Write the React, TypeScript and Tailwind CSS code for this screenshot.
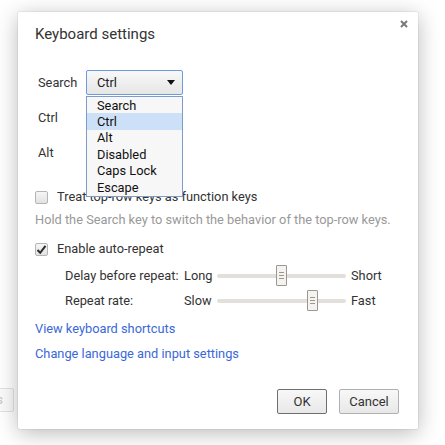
import React from "react"

const FONT = { fontFamily: "Roboto, 'Noto Sans', Arial, sans-serif" }

type SliderProps = {
  thumbLeft: number
}

/**
 * 細いトラック + 縦長のつまみ
 */
function Slider({ thumbLeft }: SliderProps) {
  return (
    <div className="relative h-[21px] w-[129px]">
      <div className="absolute left-0 right-0 top-[9px] h-[4px] rounded-sm bg-[#e3e0db]" />
      <div
        className="absolute top-0 flex h-[21px] w-[11px] flex-col items-center justify-center gap-[2px] rounded-[1px] border border-[#9e978f] bg-[#f5f3f0]"
        style={{ left: thumbLeft }}
      >
        <span className="h-px w-[5px] bg-[#9e978f]" />
        <span className="h-px w-[5px] bg-[#9e978f]" />
        <span className="h-px w-[5px] bg-[#9e978f]" />
      </div>
    </div>
  )
}

function Checkbox({ checked }: { checked: boolean }) {
  return (
    <span className="flex h-[13px] w-[13px] items-center justify-center rounded-[2px] border border-[#b4b4b4] bg-gradient-to-b from-[#f6f6f6] to-[#e2e2e2]">
      {checked && (
        <svg width="11" height="11" viewBox="0 0 11 11">
          <path d="M1.5 6 L4.2 8.8 L9.5 1.8" fill="none" stroke="#2b2b2b" strokeWidth="2" />
        </svg>
      )}
    </span>
  )
}

/**
 * value 無し = ドロップダウンの下に隠れている select（枠だけ）
 */
function SelectBox({ value, focused }: { value?: string; focused?: boolean }) {
  return (
    <div
      className={
        "flex h-[25px] w-[97px] items-center justify-between rounded-[2px] border bg-gradient-to-b from-[#f8f8f8] to-[#e6e6e6] pl-[10px] pr-[7px] text-[12.8px] text-[#222] " +
        (focused ? "border-[#6c9be0]" : "border-[#b4b4b4]")
      }
    >
      <span>{value}</span>
      <svg width="8" height="5" viewBox="0 0 8 5">
        <path d="M0 0 L8 0 L4 5 Z" fill="#111" />
      </svg>
    </div>
  )
}

const OPTIONS = ["Search", "Ctrl", "Alt", "Disabled", "Caps Lock", "Escape"]

export default function App() {
  return (
    <div className="relative h-[445px] w-[445px] overflow-hidden bg-white" style={FONT}>
      {/* 背後のページのボタン（左端に少しだけ見える） */}
      <div className="absolute left-[-50px] top-[388px] flex h-[24px] w-[64px] items-center justify-end rounded-[2px] border border-[#e2e2e2] bg-[#fafafa] pr-[10px] text-[13px] text-[#c4c4c4]">
        Keys
      </div>

      <div className="relative ml-[18px] mt-[12px] flex h-[417px] w-[400px] flex-col rounded-[2px] bg-white pb-[15px] pl-[17px] pr-[19px] pt-[12px] text-[12.8px] text-[#333] shadow-[0_0_0_1px_rgba(0,0,0,0.05),0_4px_22px_rgba(0,0,0,0.28)]">
        <div className="flex items-start justify-between">
          <h1 className="text-[15px] leading-[20px] text-[#333]">Keyboard settings</h1>
          <svg className="mr-[-9px] mt-[-4px]" width="8" height="8" viewBox="0 0 8 8">
            <path d="M1 1 L7 7 M7 1 L1 7" stroke="#7a7a7a" strokeWidth="2" />
          </svg>
        </div>

        {/* 修飾キーの割り当て */}
        <div className="relative mt-[26px] flex flex-col gap-[10px] pl-[3px]">
          <div className="flex items-center">
            <span className="w-[48px]">Search</span>
            <SelectBox value="Ctrl" focused />
          </div>
          <div className="flex items-center">
            <span className="w-[48px]">Ctrl</span>
            <SelectBox />
          </div>
          <div className="flex items-center">
            <span className="w-[48px]">Alt</span>
            <SelectBox />
          </div>

          {/* 開いているドロップダウン */}
          <ul className="absolute left-[51px] top-[26px] w-[97px] border border-[#7f9cc6] bg-[#f7f7f7] pb-[1px] text-[12.8px] text-[#111]">
            {OPTIONS.map((opt) => (
              <li
                key={opt}
                className={
                  "flex h-[16.4px] items-center pl-[10px] " + (opt === "Ctrl" ? "bg-[#cce1f8]" : "")
                }
              >
                {opt}
              </li>
            ))}
          </ul>
        </div>

        <label className="mt-[24px] flex h-[16px] items-center gap-[9px]">
          <Checkbox checked={false} />
          <span>Treat top-row keys as function keys</span>
        </label>
        <p className="mt-[7px] leading-[16px] text-[#999]">
          Hold the Search key to switch the behavior of the top-row keys.
        </p>

        <label className="mt-[13px] flex h-[16px] items-center gap-[9px]">
          <Checkbox checked />
          <span>Enable auto-repeat</span>
        </label>

        <div className="mt-[8px] flex items-center pl-[30px]">
          <span className="w-[119px]">Delay before repeat:</span>
          <span className="w-[33px]">Long</span>
          <Slider thumbLeft={59} />
          <span className="ml-[5px]">Short</span>
        </div>
        <div className="mt-[4px] flex items-center pl-[30px]">
          <span className="w-[119px]">Repeat rate:</span>
          <span className="w-[33px]">Slow</span>
          <Slider thumbLeft={90} />
          <span className="ml-[5px]">Fast</span>
        </div>

        <a className="mt-[10px] self-start leading-[16px] text-[#3b68d8]">View keyboard shortcuts</a>
        <a className="mt-[9px] self-start leading-[16px] text-[#3b68d8]">
          Change language and input settings
        </a>

        <div className="mt-auto flex justify-end gap-[12px]">
          <button className="h-[25px] w-[50px] rounded-[2px] border border-[#6f6f6f] bg-gradient-to-b from-[#f8f8f8] to-[#e8e8e8] text-[13px] text-[#333]">
            OK
          </button>
          <button className="h-[25px] w-[60px] rounded-[2px] border border-[#b0b0b0] bg-gradient-to-b from-[#f8f8f8] to-[#e8e8e8] text-[13px] text-[#333]">
            Cancel
          </button>
        </div>
      </div>
    </div>
  )
}
